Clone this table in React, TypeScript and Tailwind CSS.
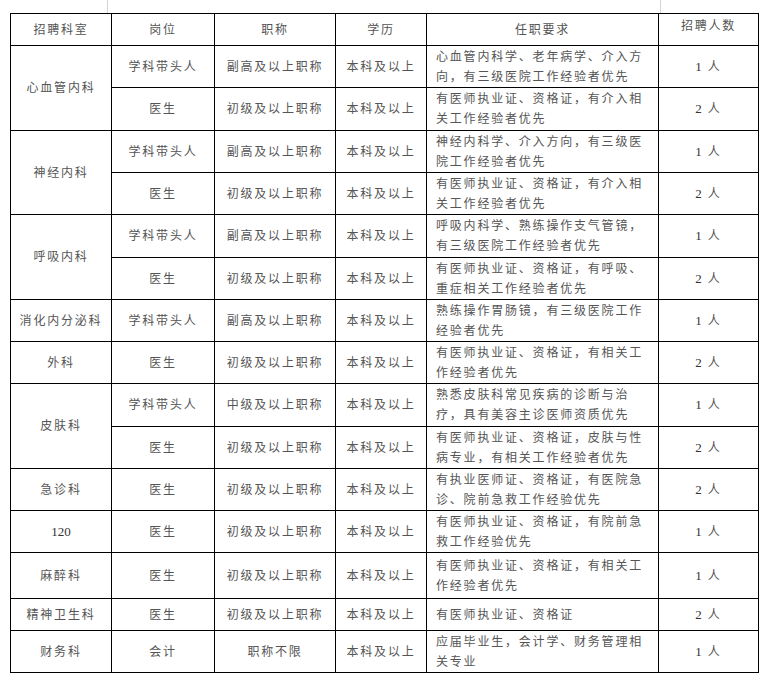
type Row = {
  dept?: string;
  span?: number;
  post: string;
  title: string;
  edu: string;
  req: string[];
  num: string;
  h: string;
};

const rows: Row[] = [
  { dept: '心血管内科', span: 2, post: '学科带头人', title: '副高及以上职称', edu: '本科及以上', req: ['心血管内科学、老年病学、介入方', '向，有三级医院工作经验者优先'], num: '1', h: 'h-[42px]' },
  { post: '医生', title: '初级及以上职称', edu: '本科及以上', req: ['有医师执业证、资格证，有介入相', '关工作经验者优先'], num: '2', h: 'h-[43px]' },
  { dept: '神经内科', span: 2, post: '学科带头人', title: '副高及以上职称', edu: '本科及以上', req: ['神经内科学、介入方向，有三级医', '院工作经验者优先'], num: '1', h: 'h-[42px]' },
  { post: '医生', title: '初级及以上职称', edu: '本科及以上', req: ['有医师执业证、资格证，有介入相', '关工作经验者优先'], num: '2', h: 'h-[42px]' },
  { dept: '呼吸内科', span: 2, post: '学科带头人', title: '副高及以上职称', edu: '本科及以上', req: ['呼吸内科学、熟练操作支气管镜，', '有三级医院工作经验者优先'], num: '1', h: 'h-[43px]' },
  { post: '医生', title: '初级及以上职称', edu: '本科及以上', req: ['有医师执业证、资格证，有呼吸、', '重症相关工作经验者优先'], num: '2', h: 'h-[42px]' },
  { dept: '消化内分泌科', span: 1, post: '学科带头人', title: '副高及以上职称', edu: '本科及以上', req: ['熟练操作胃肠镜，有三级医院工作', '经验者优先'], num: '1', h: 'h-[42px]' },
  { dept: '外科', span: 1, post: '医生', title: '初级及以上职称', edu: '本科及以上', req: ['有医师执业证、资格证，有相关工', '作经验者优先'], num: '2', h: 'h-[42px]' },
  { dept: '皮肤科', span: 2, post: '学科带头人', title: '中级及以上职称', edu: '本科及以上', req: ['熟悉皮肤科常见疾病的诊断与治', '疗，具有美容主诊医师资质优先'], num: '1', h: 'h-[43px]' },
  { post: '医生', title: '初级及以上职称', edu: '本科及以上', req: ['有医师执业证、资格证，皮肤与性', '病专业，有相关工作经验者优先'], num: '2', h: 'h-[42px]' },
  { dept: '急诊科', span: 1, post: '医生', title: '初级及以上职称', edu: '本科及以上', req: ['有执业医师证、资格证，有医院急', '诊、院前急救工作经验优先'], num: '2', h: 'h-[42px]' },
  { dept: '120', span: 1, post: '医生', title: '初级及以上职称', edu: '本科及以上', req: ['有医师执业证、资格证，有院前急', '救工作经验优先'], num: '1', h: 'h-[42px]' },
  { dept: '麻醉科', span: 1, post: '医生', title: '初级及以上职称', edu: '本科及以上', req: ['有医师执业证、资格证，有相关工', '作经验者优先'], num: '1', h: 'h-[46px]' },
  { dept: '精神卫生科', span: 1, post: '医生', title: '初级及以上职称', edu: '本科及以上', req: ['有医师执业证、资格证'], num: '2', h: 'h-[32px]' },
  { dept: '财务科', span: 1, post: '会计', title: '职称不限', edu: '本科及以上', req: ['应届毕业生，会计学、财务管理相', '关专业'], num: '1', h: 'h-[42px]' },
];

const cell = 'border border-black text-center align-middle p-0';

export default function App() {
  return (
    <div
      className="w-[768px] h-[685px] bg-white text-[#555] text-[12px] leading-[20px] tracking-[1.8px]"
      style={{ fontFamily: '"Liberation Serif", "Noto Sans CJK SC", serif' }}
    >
      <div className="flex h-[13px]">
        <div className="ml-[107px] w-px h-full bg-[#d4d4d4]" />
        <div className="ml-[552px] w-px h-full bg-[#d4d4d4]" />
      </div>
      <table className="ml-[10px] w-[748px] table-fixed border-collapse">
        <colgroup>
          <col className="w-[101px]" />
          <col className="w-[103px]" />
          <col className="w-[121px]" />
          <col className="w-[91px]" />
          <col className="w-[232px]" />
          <col className="w-[100px]" />
        </colgroup>
        <thead>
          <tr className="h-[32px]">
            <th className={`${cell} font-normal`}>招聘科室</th>
            <th className={`${cell} font-normal`}>岗位</th>
            <th className={`${cell} font-normal`}>职称</th>
            <th className={`${cell} font-normal`}>学历</th>
            <th className={`${cell} font-normal`}>任职要求</th>
            <th className="border border-black text-center align-top pt-[2px] font-normal">招聘人数</th>
          </tr>
        </thead>
        <tbody>
          {rows.map((r, i) => (
            <tr key={i} className={r.h}>
              {r.dept && (
                <td rowSpan={r.span} className={cell}>
                  {r.dept === '120' ? (
                    <span className="text-[13px] tracking-normal text-[#333]">120</span>
                  ) : (
                    r.dept
                  )}
                </td>
              )}
              <td className={cell}>{r.post}</td>
              <td className={cell}>{r.title}</td>
              <td className={cell}>{r.edu}</td>
              <td className="border border-black align-middle text-left pl-[9px] whitespace-nowrap">
                {r.req.map((l, j) => (
                  <div key={j}>{l}</div>
                ))}
              </td>
              <td className={cell}>
                <span className="text-[13px] tracking-normal text-[#333] mr-[6px]">{r.num}</span>人
              </td>
            </tr>
          ))}
        </tbody>
      </table>
    </div>
  );
}
